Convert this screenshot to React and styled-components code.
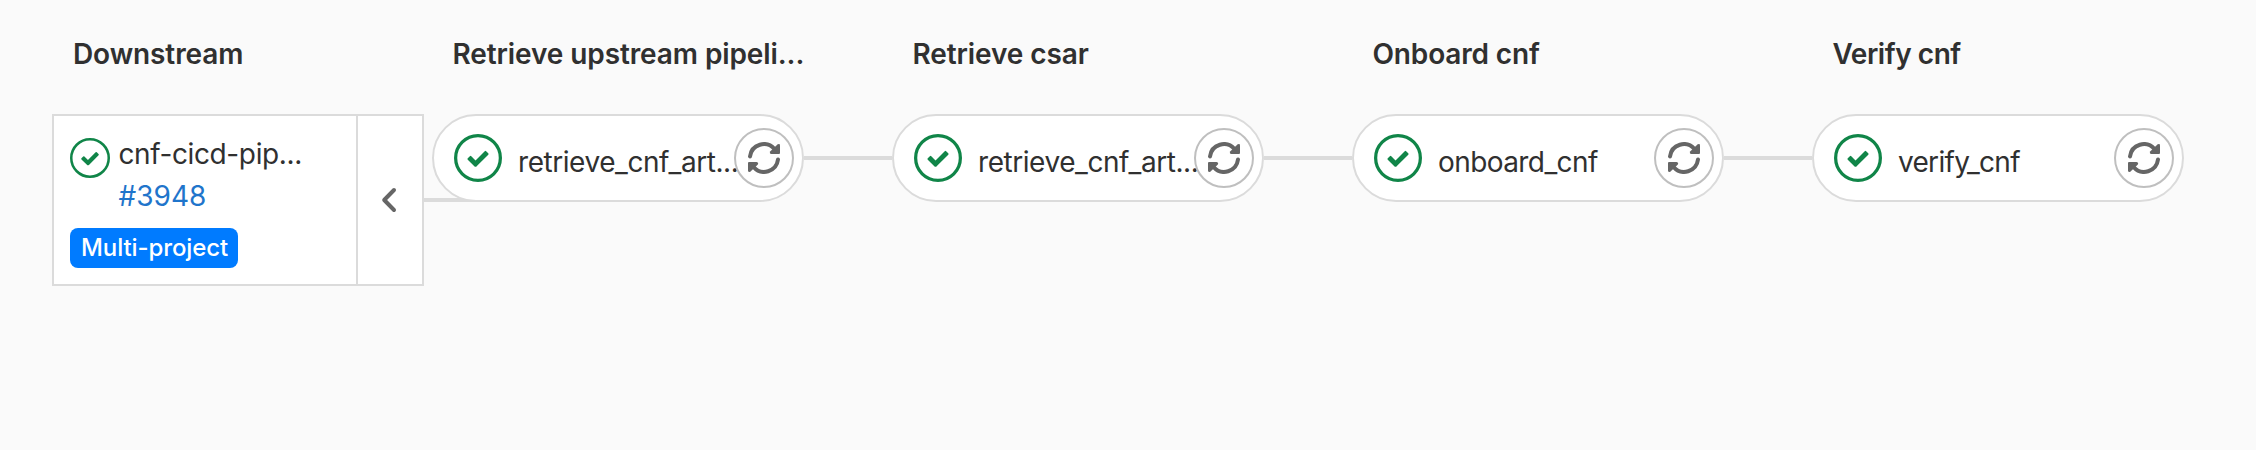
import React from 'react';
import styled, { createGlobalStyle } from 'styled-components';

const GlobalStyle = createGlobalStyle`
  *, *::before, *::after { box-sizing: border-box; }
  body {
    margin: 0;
    background: #fafafa;
    color: #303030;
    font-family: Inter, "Liberation Sans", sans-serif;
    font-size: 28px;
    line-height: 34px;
  }
`;

const Graph = styled.main`
  display: flex;
  align-items: flex-start;
  height: 450px;
  padding: 37px 52px 0;
  overflow: hidden;
`;

const Column = styled.section`
  flex: none;
  width: 372px;
`;

const Title = styled.h2`
  margin: 0 0 43px;
  padding-left: ${(p) => p.$inset || 20.5}px;
  font-size: 28px;
  line-height: 34px;
  font-weight: 600;
  letter-spacing: ${(p) => p.$tracking || -0.1}px;
  white-space: nowrap;
`;

const Link = styled.div`
  flex: none;
  width: 88px;
  height: 4px;
  margin-top: 119px;
  background: #dbdbdb;
`;

/* Runs from the downstream card to beneath the first job pill. */
const CardLink = styled(Link)`
  width: 52px;
  margin-top: 161px;
  margin-right: -44px;
`;

const Card = styled.article`
  display: flex;
  height: 172px;
  border: 2px solid #dbdbdb;
  background: #fff;
`;

const CardBody = styled.div`
  flex: 1;
  padding: 17px 0 0 16px;
`;

const CardHead = styled.div`
  display: flex;
  align-items: flex-start;
  gap: 8.5px;
  height: 84px;

  svg { margin-top: 5px; }
`;

const CardText = styled.div`
  display: flex;
  flex-direction: column;
  line-height: 42px;
  white-space: nowrap;
`;

const ProjectName = styled.span`
  letter-spacing: -0.38px;
`;

const PipelineLink = styled.a`
  color: #1f75cb;
  text-decoration: none;
`;

const Badge = styled.span`
  display: block;
  width: 168px;
  height: 40px;
  margin-top: 11px;
  padding-left: 11px;
  border-radius: 8px;
  background: #007bff;
  color: #fff;
  font-size: 24px;
  font-weight: 450;
  line-height: 39px;
  letter-spacing: -0.1px;
  white-space: nowrap;
`;

const Collapse = styled.button`
  display: flex;
  align-items: center;
  justify-content: center;
  width: 66px;
  padding: 0;
  border: 0;
  border-left: 2px solid #dbdbdb;
  background: #fff;
  color: #666;
`;

const Pill = styled.div`
  position: relative;
  display: flex;
  align-items: center;
  height: 88px;
  padding: 0 8px 0 20px;
  border: 2px solid #dbdbdb;
  border-radius: 44px;
  background: #fff;
`;

const JobName = styled.span`
  flex: 1;
  width: 0;
  padding: 8px 0 0 16px;
  letter-spacing: ${(p) => p.$tracking}px;
  white-space: nowrap;
`;

const Retry = styled.button`
  position: relative;
  display: flex;
  flex: none;
  align-items: center;
  justify-content: center;
  width: 60px;
  height: 60px;
  padding: 0;
  border: 2px solid #bfbfbf;
  border-radius: 50%;
  background: #fff;
  color: #666;
`;

const Icon = styled.svg`
  flex: none;
  display: block;
  width: ${(p) => p.$size}px;
  height: ${(p) => p.$size}px;
`;

function SuccessIcon({ size, ring }) {
  return (
    <Icon $size={size} viewBox="0 0 14 14" fill="#108548">
      <circle cx="7" cy="7" r={7 - ring / 2} fill="#fff" stroke="#108548" strokeWidth={ring} />
      <path d="M6.278 7.697L5.045 6.464a.296.296 0 0 0-.42-.002l-.613.614a.298.298 0 0 0 .002.42l1.91 1.909a.5.5 0 0 0 .703.005l.265-.265L9.997 6.04a.291.291 0 0 0-.009-.408l-.614-.614a.29.29 0 0 0-.408-.009L6.278 7.697z" />
    </Icon>
  );
}

function RetryIcon() {
  return (
    <Icon $size={32} viewBox="0 0 32 32" fill="currentColor">
      <g fill="none" stroke="currentColor" strokeWidth="4" strokeLinecap="round">
        <path d="M2 14.4A14 14 0 0 1 26.5 7" />
        <path d="M30 17.6A14 14 0 0 1 5.5 25" />
      </g>
      <path d="M22.4 9.2L29.7 2.3Q32 1.2 32 3.4V11Q32 12 31 12H23.4Q20.9 11.4 22.4 9.2Z" />
      <path d="M9.6 22.8L2.3 29.7Q0 30.8 0 28.6V21Q0 20 1 20H8.6Q11.1 20.6 9.6 22.8Z" />
    </Icon>
  );
}

function ChevronIcon() {
  return (
    <Icon $size={32} viewBox="0 0 32 32" fill="none" stroke="currentColor" strokeWidth="4" strokeLinecap="round" strokeLinejoin="round">
      <path d="M20 6L10.2 16L20 26" />
    </Icon>
  );
}

const stages = [
  { title: 'Retrieve upstream pipeli...', job: 'retrieve_cnf_art...', tracking: -0.44 },
  { title: 'Retrieve csar', job: 'retrieve_cnf_art...', tracking: -0.44 },
  { title: 'Onboard cnf', titleTracking: -0.15, job: 'onboard_cnf', tracking: -0.58 },
  { title: 'Verify cnf', titleTracking: -0.45, job: 'verify_cnf', tracking: -0.7 },
];

export default function App() {
  return (
    <>
      <GlobalStyle />
      <Graph>
        <Column>
          <Title $inset={21}>Downstream</Title>
          <Card>
            <CardBody>
              <CardHead>
                <SuccessIcon size={40} ring={0.88} />
                <CardText>
                  <ProjectName>cnf-cicd-pip...</ProjectName>
                  <PipelineLink>#3948</PipelineLink>
                </CardText>
              </CardHead>
              <Badge>Multi-project</Badge>
            </CardBody>
            <Collapse aria-label="Collapse">
              <ChevronIcon />
            </Collapse>
          </Card>
        </Column>
        <CardLink />
        {stages.map((stage, i) => (
          <React.Fragment key={stage.title}>
            {i > 0 && <Link />}
            <Column>
              <Title $tracking={stage.titleTracking}>{stage.title}</Title>
              <Pill>
                <SuccessIcon size={48} ring={0.95} />
                <JobName $tracking={stage.tracking}>{stage.job}</JobName>
                <Retry aria-label="Retry">
                  <RetryIcon />
                </Retry>
              </Pill>
            </Column>
          </React.Fragment>
        ))}
      </Graph>
    </>
  );
}
